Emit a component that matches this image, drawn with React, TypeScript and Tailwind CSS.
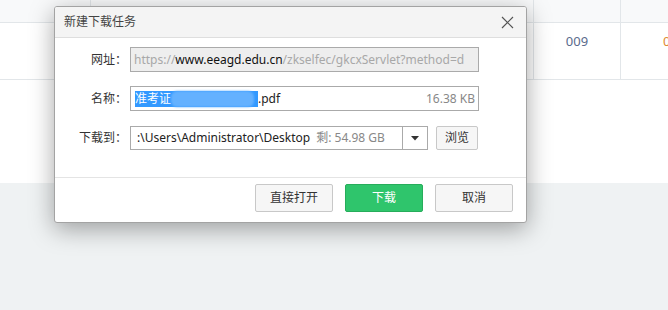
import React from "react";

const font = { fontFamily: '"Noto Sans", "Noto Sans CJK SC", sans-serif' };

export default function App() {
  return (
    <div
      className="relative w-[668px] h-[310px] overflow-hidden bg-white flex flex-col"
      style={font}
    >
      {/* background table */}
      <div className="flex h-[23px] bg-[#f8f9fa] border-b border-[#e2e6e9]">
        <div className="w-[91px] border-r border-[#e2e6e9]" />
        <div className="w-[443px] border-r border-[#e2e6e9]" />
        <div className="w-[87px] border-r border-[#e2e6e9]" />
        <div className="flex-1" />
      </div>
      <div className="flex h-[57px] border-b border-[#e2e6e9]">
        <div className="w-[534px] border-r border-[#e2e6e9]" />
        <div className="w-[87px] border-r border-[#e2e6e9] flex items-start justify-center pt-[9px] text-[13px] text-[#5a6b8c]">
          009
        </div>
        <div className="flex-1 flex items-start pt-[9px] pl-[42px] text-[13px] text-[#e08a2e] overflow-hidden whitespace-nowrap">
          0
        </div>
      </div>
      <div className="h-[103px] bg-white" />
      <div className="flex-1 bg-[#eff2f3]" />

      {/* dialog */}
      <div className="absolute left-[54px] top-[6px] w-[473px] h-[217px] bg-white border border-[#a3a3a3] rounded-[3px] shadow-[0_6px_24px_rgba(0,0,0,0.35)] flex flex-col overflow-hidden">
        <div className="h-[31px] bg-[#f4f4f4] border-b border-[#dedede] flex items-center justify-between pl-[9px] pr-[12px]">
          <span className="text-[12px] text-[#444]">新建下载任务</span>
          <svg width="13" height="13" viewBox="0 0 13 13" className="mt-[1px]">
            <path d="M1 1 L12 12 M12 1 L1 12" stroke="#555" strokeWidth="1.2" fill="none" />
          </svg>
        </div>

        <div className="flex flex-col pt-[9px]">
          {/* url row */}
          <div className="flex items-center h-[25px]">
            <div className="w-[75px] text-right text-[12px] text-[#333] pr-[3px]">网址：</div>
            <div className="w-[349px] h-[25px] border border-[#aaaaaa] bg-[#eeeeee] flex items-center pl-[3px] text-[12px] whitespace-nowrap overflow-hidden">
              <span className="text-[#a8a8a8]">https://</span>
              <span className="text-[#111]">www.eeagd.edu.cn</span>
              <span className="text-[#a8a8a8]">/zkselfec/gkcxServlet?method=d</span>
            </div>
          </div>

          {/* name row */}
          <div className="flex items-center h-[25px] mt-[14px]">
            <div className="w-[75px] text-right text-[12px] text-[#333] pr-[3px]">名称：</div>
            <div className="w-[349px] h-[25px] border border-[#aaaaaa] bg-white flex items-center pl-[4px] pr-[3px] text-[12px] whitespace-nowrap">
              <span className="bg-[#3399ff] text-white h-[16px] leading-[16px] flex items-center">
                准考证
                <span className="inline-block w-[83px] h-[16px] bg-[#64b1ff] rounded-[6px] blur-[1px]" />
                <span className="inline-block w-[4px] h-[16px]" />
              </span>
              <span className="text-[#222]">.pdf</span>
              <span className="ml-auto text-[#888]">16.38 KB</span>
            </div>
          </div>

          {/* path row */}
          <div className="flex items-center h-[24px] mt-[15px]">
            <div className="w-[75px] text-right text-[12px] text-[#333] pr-[3px]">下载到：</div>
            <div className="w-[298px] h-[24px] border border-[#aaaaaa] bg-white flex items-center text-[12px] whitespace-nowrap">
              <div className="flex-1 pl-[6px] overflow-hidden">
                <span className="text-[#222]">:\Users\Administrator\Desktop</span>
                <span className="text-[#888] ml-[6px]">剩: 54.98 GB</span>
              </div>
              <div className="w-[25px] h-full border-l border-[#aaaaaa] flex items-center justify-center">
                <svg width="8" height="5" viewBox="0 0 8 5">
                  <path d="M0 0 L8 0 L4 4.5 Z" fill="#333" />
                </svg>
              </div>
            </div>
            <div className="ml-[8px] w-[42px] h-[24px] border border-[#c8c8c8] bg-[#f6f6f6] rounded-[2px] flex items-center justify-center text-[12px] text-[#333]">
              浏览
            </div>
          </div>
        </div>

        <div className="mt-auto border-t border-[#e4e4e4] h-[45px] flex items-start justify-end pt-[6px] pr-[13px] gap-[12px]">
          <div className="w-[78px] h-[28px] border border-[#c8c8c8] bg-[#f6f6f6] rounded-[2px] flex items-center justify-center text-[12px] text-[#333]">
            直接打开
          </div>
          <div className="w-[78px] h-[28px] border border-[#27ad5b] bg-[#2fc56c] rounded-[2px] flex items-center justify-center text-[12px] text-white">
            下载
          </div>
          <div className="w-[78px] h-[28px] border border-[#c8c8c8] bg-[#f6f6f6] rounded-[2px] flex items-center justify-center text-[12px] text-[#333]">
            取消
          </div>
        </div>
      </div>
    </div>
  );
}
